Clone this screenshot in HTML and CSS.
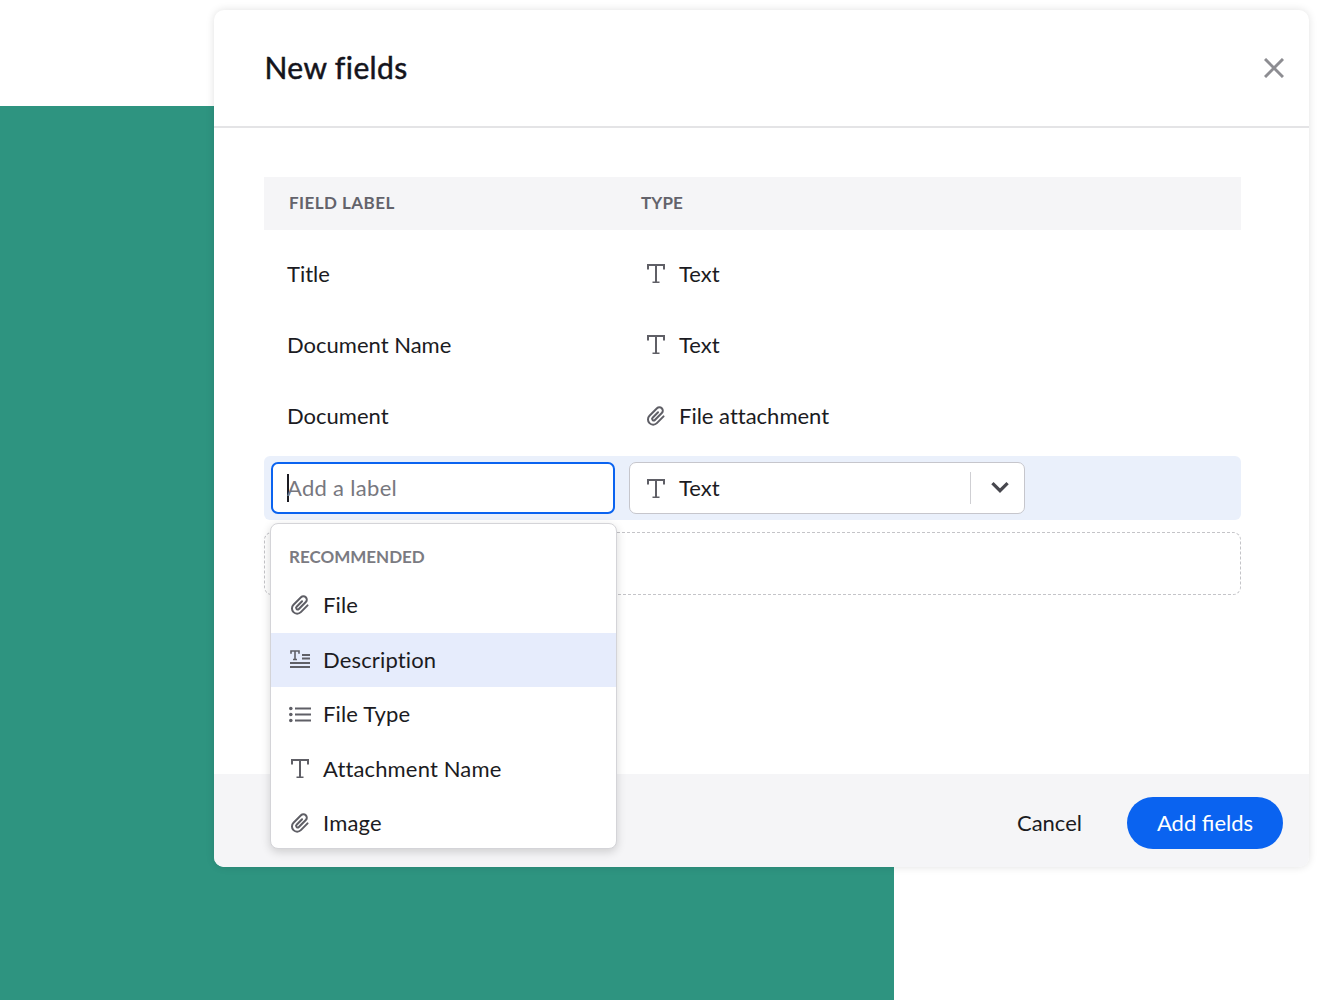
FILE: index.html
```html
<!DOCTYPE html>
<html lang="en">
<head>
    <meta charset="UTF-8">
    <meta name="viewport" content="width=device-width, initial-scale=1.0">
    <title>New fields</title>
    <link rel="stylesheet" href="styles.css">
</head>
<body>

<svg class="icon-defs" aria-hidden="true">
    <symbol id="icon-text" viewBox="0 0 20 20">
        <path d="M2 6.5V2H18V6.5M10 2V19.5M6.5 19.5H13.5" fill="none" stroke="currentColor" stroke-width="2"/>
    </symbol>
    <symbol id="icon-clip" viewBox="0 0 20 20">
        <g transform="translate(0 0.6) rotate(45 10 10)">
            <path d="M15.2 4.5V14A5.2 5.2 0 0 1 4.8 14V3.4A3.4 3.4 0 0 1 11.6 3.4V13.2A1.6 1.6 0 0 1 8.4 13.2V5.5" fill="none" stroke="currentColor" stroke-width="2" stroke-linecap="round"/>
        </g>
    </symbol>
    <symbol id="icon-desc" viewBox="0 0 22 20">
        <path d="M2 4.8V2H10V4.8M6 2V10.5M4 10.5H8" fill="none" stroke="currentColor" stroke-width="1.6"/>
        <path d="M13 6H21M13 9.5H21M1 14H21M1 18H21" fill="none" stroke="currentColor" stroke-width="1.8"/>
    </symbol>
    <symbol id="icon-list" viewBox="0 0 22 20">
        <circle cx="1.8" cy="4.5" r="1.8" fill="currentColor"/>
        <circle cx="1.8" cy="10.5" r="1.8" fill="currentColor"/>
        <circle cx="1.8" cy="16.5" r="1.8" fill="currentColor"/>
        <path d="M6 4.5H22M6 10.5H22M6 16.5H22" fill="none" stroke="currentColor" stroke-width="2"/>
    </symbol>
</svg>

<div class="stage">
    <div class="modal">
        <div class="modal-header">
            <h2 class="modal-title">New fields</h2>
            <svg class="close-icon" viewBox="0 0 20 20">
                <path d="M1 1L19 19M19 1L1 19" fill="none" stroke="currentColor" stroke-width="3"/>
            </svg>
        </div>

        <div class="modal-body">
            <div class="table-head">
                <span class="col-label">FIELD LABEL</span>
                <span class="col-type">TYPE</span>
            </div>
            <div class="field-row">
                <span class="field-label">Title</span>
                <span class="field-type"><svg class="type-icon"><use href="#icon-text"/></svg>Text</span>
            </div>
            <div class="field-row">
                <span class="field-label">Document Name</span>
                <span class="field-type"><svg class="type-icon"><use href="#icon-text"/></svg>Text</span>
            </div>
            <div class="field-row">
                <span class="field-label">Document</span>
                <span class="field-type"><svg class="type-icon"><use href="#icon-clip"/></svg>File attachment</span>
            </div>

            <div class="new-row">
                <div class="label-input"><span class="caret"></span>Add a label</div>
                <div class="type-select">
                    <span class="field-type"><svg class="type-icon"><use href="#icon-text"/></svg>Text</span>
                    <span class="select-arrow">
                        <svg class="chevron" viewBox="0 0 18 12">
                            <path d="M2 2L9 9L16 2" fill="none" stroke="currentColor" stroke-width="3"/>
                        </svg>
                    </span>
                </div>

                <div class="suggest-menu">
                    <div class="menu-title">RECOMMENDED</div>
                    <div class="menu-item"><svg class="menu-icon"><use href="#icon-clip"/></svg>File</div>
                    <div class="menu-item active"><svg class="menu-icon"><use href="#icon-desc"/></svg>Description</div>
                    <div class="menu-item"><svg class="menu-icon"><use href="#icon-list"/></svg>File Type</div>
                    <div class="menu-item"><svg class="menu-icon"><use href="#icon-text"/></svg>Attachment Name</div>
                    <div class="menu-item"><svg class="menu-icon"><use href="#icon-clip"/></svg>Image</div>
                </div>
            </div>

            <div class="add-row"></div>
        </div>

        <div class="modal-footer">
            <span class="cancel-link">Cancel</span>
            <button class="add-button">Add fields</button>
        </div>
    </div>
</div>

</body>
</html>
```

FILE: styles.css
```css
body {
    margin: 0;
    font-family: "Lato", "Noto Sans", sans-serif;
    font-variant-ligatures: none;
    color: #1b1b22;
    background: #fff;
}
.icon-defs {
    display: none;
}
.stage {
    height: 1000px;
    padding: 10px 11px 0 213.5px;
    box-sizing: border-box;
    overflow: hidden;
    background: linear-gradient(#2e9480, #2e9480) 0 106px / 894px 894px no-repeat;
}
.modal {
    height: 857px;
    display: flex;
    flex-direction: column;
    background: #fff;
    border-radius: 10px;
    box-shadow: 0 0 8px rgba(0,0,0,0.12);
}
.modal-header {
    height: 118px;
    flex: none;
    box-sizing: border-box;
    display: flex;
    align-items: center;
    justify-content: space-between;
    padding: 0 25.5px 2px 51px;
    border-bottom: 2px solid #e4e4e6;
}
.modal-title {
    margin: 0;
    font-size: 30px;
    font-weight: 400;
    -webkit-text-stroke: 0.5px #14141c;
    letter-spacing: 0.4px;
    color: #14141c;
}
.close-icon {
    width: 20px;
    height: 20px;
    margin-top: 2px;
    color: #8d8d92;
}
.modal-body {
    flex: 1;
    padding: 49px 68px 0 50.5px;
}
.table-head {
    height: 53px;
    display: flex;
    align-items: center;
    padding-bottom: 2px;
    box-sizing: border-box;
    background: #f5f5f7;
    font-size: 17px;
    font-weight: 700;
    letter-spacing: 0.1px;
    color: #63636b;
    margin-bottom: 7.4px;
}
.col-label {
    width: 352px;
    padding-left: 25px;
    letter-spacing: 0.45px;
}
.field-row {
    height: 71.4px;
    display: flex;
    align-items: center;
    font-size: 22px;
}
.field-label {
    width: 354px;
    padding-left: 23px;
}
.field-type {
    display: flex;
    align-items: center;
    font-size: 22px;
}
.type-icon {
    width: 20px;
    height: 20px;
    margin: 0 13px 0 5px;
    color: #5f5f66;
}
.new-row {
    position: relative;
    height: 64px;
    margin-top: 4.4px;
    display: flex;
    align-items: center;
    gap: 14px;
    padding-left: 7px;
    background: #eaf0fb;
    border-radius: 6px;
}
.label-input {
    width: 344px;
    height: 52px;
    box-sizing: border-box;
    display: flex;
    align-items: center;
    padding-left: 14px;
    background: #fff;
    border: 2.5px solid #0a63f0;
    border-radius: 7px;
    font-size: 22px;
    letter-spacing: 0.3px;
    color: #77777e;
}
.caret {
    width: 1.5px;
    height: 28px;
    margin-right: -1.5px;
    background: #1b1b22;
}
.type-select {
    width: 396px;
    height: 52px;
    box-sizing: border-box;
    display: flex;
    align-items: center;
    justify-content: space-between;
    padding-left: 11px;
    background: #fff;
    border: 1px solid #c6c6cc;
    border-radius: 7px;
}
.select-arrow {
    width: 49px;
    height: 32px;
    padding-left: 4px;
    display: flex;
    align-items: center;
    justify-content: center;
    border-left: 1px solid #cfcfd3;
}
.chevron {
    width: 20px;
    height: 13px;
    color: #47474e;
}
.suggest-menu {
    position: absolute;
    top: 67px;
    left: 6px;
    z-index: 5;
    width: 347px;
    height: 326px;
    box-sizing: border-box;
    overflow: hidden;
    background: #fff;
    border: 1px solid #d4d4d8;
    border-radius: 8px;
    box-shadow: 0 3px 10px rgba(0,0,0,0.16);
}
.menu-title {
    height: 54.5px;
    display: flex;
    align-items: center;
    padding: 10px 0 0 18px;
    box-sizing: border-box;
    font-size: 17px;
    font-weight: 700;
    color: #7b7b82;
}
.menu-item {
    height: 54.5px;
    display: flex;
    align-items: center;
    padding-bottom: 2px;
    box-sizing: border-box;
    font-size: 22px;
    letter-spacing: 0.15px;
}
.menu-item.active {
    background: #e6ecfc;
}
.menu-icon {
    width: 22px;
    height: 20px;
    margin: 0 12px 0 18px;
    color: #5f5f66;
}
.add-row {
    height: 61px;
    margin-top: 12px;
    border: 1px dashed #c4c4c8;
    border-radius: 8px;
}
.modal-footer {
    height: 93px;
    flex: none;
    box-sizing: border-box;
    display: flex;
    align-items: center;
    justify-content: flex-end;
    gap: 45px;
    padding: 4px 26px 0 0;
    background: #f5f5f7;
    border-radius: 0 0 10px 10px;
}
.cancel-link {
    font-size: 22px;
}
.add-button {
    width: 156px;
    height: 52px;
    border: none;
    border-radius: 26px;
    background: #0a63f0;
    color: #fff;
    font-family: inherit;
    font-size: 22px;
}
```
